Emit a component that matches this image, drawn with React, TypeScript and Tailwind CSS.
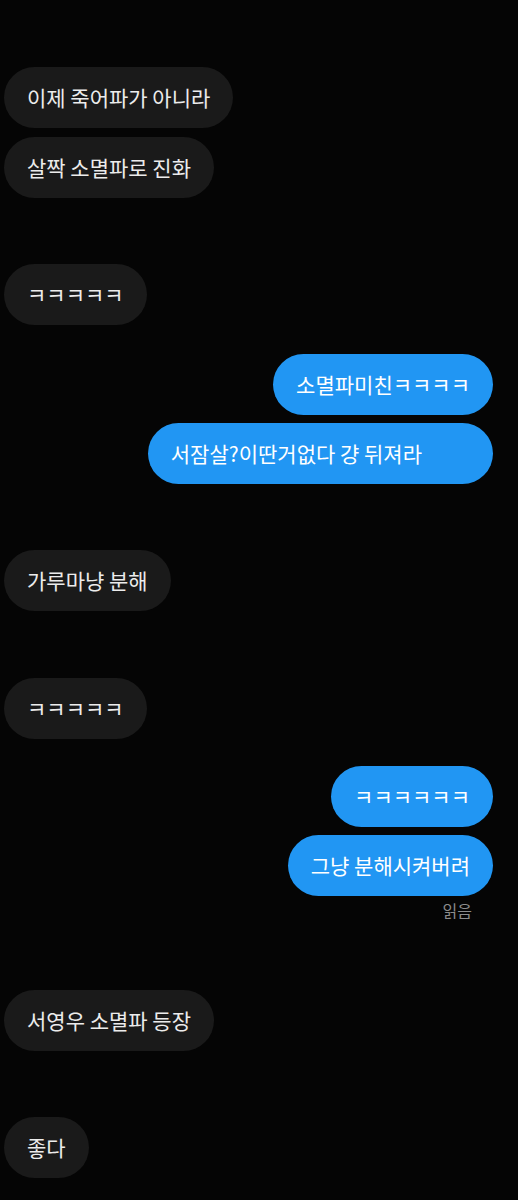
type Msg = { text: string; mine?: boolean; gap: string; pad?: string };

// gaps and paddings written out in full so Tailwind picks them up
const messages: Msg[] = [
  { text: "이제 죽어파가 아니라", gap: "mt-[67px]" },
  { text: "살짝 소멸파로 진화", gap: "mt-[9px]" },
  { text: "ㅋㅋㅋㅋㅋ", gap: "mt-[66px]" },
  { text: "소멸파미친ㅋㅋㅋㅋ", mine: true, gap: "mt-[29px]" },
  // this one has a wide empty tail in the screenshot
  { text: "서잠살?이딴거없다 걍 뒤져라", mine: true, gap: "mt-[8px]", pad: "pr-[71px]" },
  { text: "가루마냥 분해", gap: "mt-[66px]" },
  { text: "ㅋㅋㅋㅋㅋ", gap: "mt-[67px]" },
  { text: "ㅋㅋㅋㅋㅋㅋ", mine: true, gap: "mt-[27px]" },
  { text: "그냥 분해시켜버려", mine: true, gap: "mt-[8px]" },
  { text: "서영우 소멸파 등장", gap: "mt-[70px]" },
  { text: "좋다", gap: "mt-[66px]" },
];

function Bubble({ msg }: { msg: Msg }) {
  return (
    <div
      className={`flex ${msg.gap} ${msg.mine ? "justify-end pr-[25px]" : "justify-start pl-[4px]"}`}
    >
      <div
        className={`h-[61px] flex items-center pl-[23px] ${msg.pad ?? "pr-[23px]"} rounded-full text-[21px] leading-none whitespace-nowrap ${
          msg.mine ? "bg-[#2196f3] text-white" : "bg-[#1a1a1a] text-[#ececec]"
        }`}
      >
        {msg.text}
      </div>
    </div>
  );
}

export default function App() {
  return (
    <div className="w-[518px] h-[1200px] bg-[#050505] overflow-hidden font-['Noto_Sans_CJK_KR','Noto_Sans',sans-serif]">
      {messages.map((m, i) => (
        <div key={i}>
          <Bubble msg={m} />
          {i === 8 && (
            <div className="flex justify-end pr-[46px] mt-[4px] text-[16px] leading-[20px] text-[#8c8c8c]">
              읽음
            </div>
          )}
        </div>
      ))}
    </div>
  );
}
